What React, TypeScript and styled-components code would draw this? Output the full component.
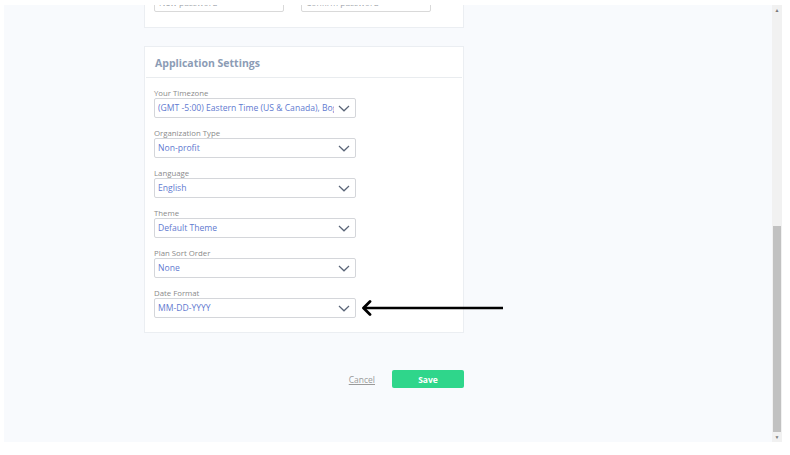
import React from "react";
import styled, { createGlobalStyle } from "styled-components";

const GlobalStyle = createGlobalStyle`
  html, body {
    margin: 0;
    padding: 0;
    background: #ffffff;
    font-family: "Open Sans", "Liberation Sans", sans-serif;
  }
`;

const Frame = styled.div`
  position: relative;
  margin: 5px 0 0 4px;
  width: 778px;
  height: 437px;
  display: flex;
  overflow: hidden;
`;

const Main = styled.div`
  flex: 1;
  background: #f8fafd;
  overflow: hidden;
  padding-left: 140px;
`;

const Column = styled.div`
  width: 320px;
  display: flex;
  flex-direction: column;
`;

const Card = styled.div`
  box-sizing: border-box;
  background: #ffffff;
  border: 1px solid #ebeef2;
`;

const PasswordCard = styled(Card)`
  height: 61px;
  margin-top: -38px;
  display: flex;
  align-items: flex-end;
  gap: 17px;
  padding: 0 32px 15px 9px;
`;

const PasswordInput = styled.div`
  flex: 1;
  height: 22px;
  box-sizing: border-box;
  border: 1px solid #d9d9d9;
  border-radius: 2px;
  font-size: 8.5px;
  color: #a0a4aa;
  padding: 6px 4px 0;
  line-height: 12px;
`;

const SettingsCard = styled(Card)`
  margin-top: 18px;
`;

const CardHeader = styled.div`
  height: 31px;
  box-sizing: border-box;
  padding: 9px 9px 0;
  margin: 0 1px;
  border-bottom: 1px solid #e9ecef;
  font-size: 10.5px;
  font-weight: 700;
  color: #8c9cb5;
`;

const CardBody = styled.div`
  padding: 10px 9px 14px;
  display: flex;
  flex-direction: column;
  gap: 10px;
`;

const Field = styled.div`
  display: flex;
  flex-direction: column;
`;

const Label = styled.div`
  font-size: 7.8px;
  line-height: 10px;
  color: #8a8a8a;
`;

const SelectBox = styled.div`
  width: 202px;
  height: 20px;
  box-sizing: border-box;
  border: 1px solid #d4d6da;
  border-radius: 2px;
  display: flex;
  align-items: center;
  padding: 0 4px 0 3px;
  font-size: 8.6px;
  color: #5f7ad0;
`;

const SelectText = styled.span`
  flex: 1;
  white-space: nowrap;
  overflow: hidden;
`;

const Chevron = styled.svg`
  width: 12px;
  height: 7px;
  margin: 0 1px 0 4px;
  flex-shrink: 0;
`;

const Actions = styled.div`
  margin-top: 37px;
  display: flex;
  justify-content: flex-end;
  align-items: center;
  gap: 17px;
`;

const CancelLink = styled.span`
  font-size: 8.5px;
  color: #9a9a9a;
  text-decoration: underline;
`;

const SaveButton = styled.button`
  width: 72px;
  height: 18px;
  border: none;
  border-radius: 2px;
  background: #2fd68b;
  color: #ffffff;
  font-family: inherit;
  font-size: 8.5px;
  font-weight: 700;
  padding: 0;
`;

const Scrollbar = styled.div`
  width: 10px;
  background: #f1f1f1;
  display: flex;
  flex-direction: column;
  align-items: center;
`;

const ScrollArrow = styled.div`
  height: 10px;
  display: flex;
  align-items: center;
  justify-content: center;
  font-size: 5px;
  color: #7a7a7a;
`;

const ScrollSpace = styled.div<{ size: number }>`
  height: ${(p) => p.size}px;
`;

const ScrollThumb = styled.div`
  width: 8px;
  flex: 1;
  background: #c1c1c1;
`;

const Pointer = styled.svg`
  position: absolute;
  left: 353px;
  top: 295px;
  width: 146px;
  height: 16px;
`;

const fields = [
  { label: "Your Timezone", value: "(GMT -5:00) Eastern Time (US & Canada), Bogota, Lima" },
  { label: "Organization Type", value: "Non-profit" },
  { label: "Language", value: "English" },
  { label: "Theme", value: "Default Theme" },
  { label: "Plan Sort Order", value: "None" },
  { label: "Date Format", value: "MM-DD-YYYY" },
];

const App: React.FC = () => {
  return (
    <>
      <GlobalStyle />
      <Frame>
        <Main>
          <Column>
            <PasswordCard>
              <PasswordInput>New password</PasswordInput>
              <PasswordInput>Confirm password</PasswordInput>
            </PasswordCard>

            <SettingsCard>
              <CardHeader>Application Settings</CardHeader>
              <CardBody>
                {fields.map((f) => (
                  <Field key={f.label}>
                    <Label>{f.label}</Label>
                    <SelectBox>
                      <SelectText>{f.value}</SelectText>
                      <Chevron viewBox="0 0 12 7">
                        <path d="M1 1 L6 5.8 L11 1" fill="none" stroke="#5a6578" strokeWidth="1.2" />
                      </Chevron>
                    </SelectBox>
                  </Field>
                ))}
              </CardBody>
            </SettingsCard>

            <Actions>
              <CancelLink>Cancel</CancelLink>
              <SaveButton>Save</SaveButton>
            </Actions>
          </Column>
        </Main>

        <Scrollbar>
          <ScrollArrow>▲</ScrollArrow>
          <ScrollSpace size={211} />
          <ScrollThumb />
          <ScrollArrow>▼</ScrollArrow>
        </Scrollbar>

        <Pointer viewBox="0 0 146 16">
          <path d="M146 8 H8" stroke="#000" strokeWidth="2.6" fill="none" />
          <path d="M13 1.5 L6.5 8 L13 14.5" stroke="#000" strokeWidth="2.8" fill="none" strokeLinecap="round" strokeLinejoin="round" />
        </Pointer>
      </Frame>
    </>
  );
};

export default App;
